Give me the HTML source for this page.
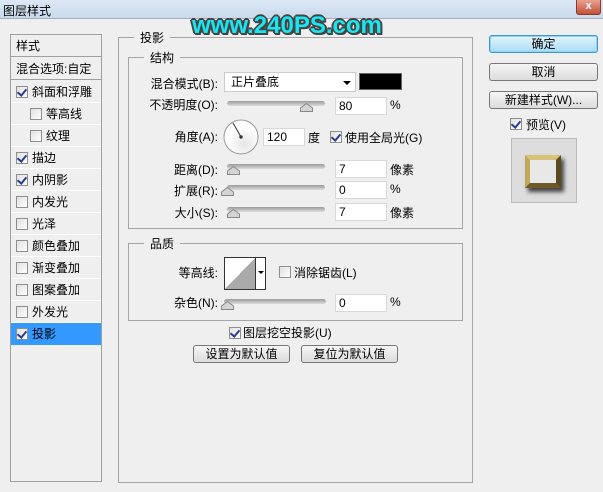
<!DOCTYPE html>
<html><head><meta charset="utf-8"><style>
*{margin:0;padding:0;box-sizing:border-box}
body{width:603px;height:492px;background:#efefef;font-family:"Liberation Sans","Noto Sans CJK SC",sans-serif;font-size:12px;color:#000;position:relative;overflow:hidden}
.a{position:absolute;white-space:nowrap}
.title{left:0;top:0;width:603px;height:19px;background:linear-gradient(#dde8f5,#c9d9ec);border-bottom:1px solid #aab}
.close{left:576px;top:0;width:25px;height:15px;background:linear-gradient(#e8a08e,#c4513a);border:1px solid #8a3a2a;border-top:none;border-radius:0 0 3px 3px;color:#fff;font-weight:bold;text-align:center;font-size:11px;line-height:13px}
.wm{left:192px;top:12px;font-size:24px;font-weight:bold;color:#19e6f0;text-shadow:-2px 0 #444,2px 0 #444,0 -2px #444,0 2px #444,-1px -1px #444,1px 1px #444,-1px 1px #444,1px -1px #444,2px 2px #444}
.panel{left:10px;top:34px;width:92px;height:448px;border:1px solid #a0a0a0;background:#efefef}
.row{position:absolute;left:0;width:90px;height:22px;line-height:22px;border-bottom:1px solid #fff}
.cb{position:absolute;width:12px;height:12px;border:1px solid #8e8f8f;background:linear-gradient(135deg,#e0e0e0,#fff)}
.cb.on::after{content:"";position:absolute;left:2px;top:0px;width:4px;height:7px;border:solid #2a3c8e;border-width:0 2px 2px 0;transform:rotate(40deg)}
.box{position:absolute;border:1px solid #a5a5a5}
.leg{position:absolute;background:#efefef;padding:0 6px}
.lbl{position:absolute;text-align:right;width:100px}
.inp{position:absolute;background:#fff;border:1px solid #d8d8d8;height:18px;line-height:16px;padding-left:3px}
.sl{position:absolute;height:5px;border-radius:3px;background:linear-gradient(#999,#ddd);width:98px}
.th{position:absolute;width:13px;height:9px}
.btn{position:absolute;border:1px solid #777;border-radius:3px;background:linear-gradient(#f6f6f6,#dcdcdc);text-align:center;height:18px;line-height:16px}
</style></head><body>
<div class="a title"></div>
<div class="a" style="left:3px;top:2px">图层样式</div>
<div class="a close">x</div>

<div class="a panel">
 <div class="row" style="top:0;padding-left:5px;border-bottom:1px solid #a0a0a0">样式</div>
 <div class="row" style="top:23px;padding-left:5px;border-bottom:1px solid #a0a0a0">混合选项:自定</div>
 <div class="row" style="top:46px"><span class="cb on" style="left:5px;top:5px"></span><span style="position:absolute;left:21px">斜面和浮雕</span></div>
 <div class="row" style="top:68px"><span class="cb" style="left:19px;top:5px"></span><span style="position:absolute;left:35px">等高线</span></div>
 <div class="row" style="top:90px"><span class="cb" style="left:19px;top:5px"></span><span style="position:absolute;left:35px">纹理</span></div>
 <div class="row" style="top:112px"><span class="cb on" style="left:5px;top:5px"></span><span style="position:absolute;left:21px">描边</span></div>
 <div class="row" style="top:134px"><span class="cb on" style="left:5px;top:5px"></span><span style="position:absolute;left:21px">内阴影</span></div>
 <div class="row" style="top:156px"><span class="cb" style="left:5px;top:5px"></span><span style="position:absolute;left:21px">内发光</span></div>
 <div class="row" style="top:178px"><span class="cb" style="left:5px;top:5px"></span><span style="position:absolute;left:21px">光泽</span></div>
 <div class="row" style="top:200px"><span class="cb" style="left:5px;top:5px"></span><span style="position:absolute;left:21px">颜色叠加</span></div>
 <div class="row" style="top:222px"><span class="cb" style="left:5px;top:5px"></span><span style="position:absolute;left:21px">渐变叠加</span></div>
 <div class="row" style="top:244px"><span class="cb" style="left:5px;top:5px"></span><span style="position:absolute;left:21px">图案叠加</span></div>
 <div class="row" style="top:266px"><span class="cb" style="left:5px;top:5px"></span><span style="position:absolute;left:21px">外发光</span></div>
 <div class="row" style="top:288px;background:#3399ff;border:none"><span class="cb on" style="left:5px;top:5px"></span><span style="position:absolute;left:21px">投影</span></div>
</div>

<div class="box" style="left:118px;top:37px;width:355px;height:446px"></div>
<div class="leg" style="left:134px;top:29px">投影</div>
<div class="box" style="left:128px;top:57px;width:335px;height:172px"></div>
<div class="leg" style="left:144px;top:49px">结构</div>

<div class="lbl" style="left:118px;top:75px">混合模式(B):</div>
<div class="inp" style="left:224px;top:72px;width:132px;height:20px;line-height:18px;padding-left:6px;border-color:#ccc">正片叠底<span style="position:absolute;right:4px;top:8px;border:4px solid transparent;border-top:4px solid #000;border-bottom:none"></span></div>
<div class="a" style="left:359px;top:73px;width:43px;height:17px;background:#000;border:1px solid #666"></div>

<div class="lbl" style="left:118px;top:96px">不透明度(O):</div>
<div class="sl" style="left:227px;top:101px"></div>
<svg class="th" style="left:300px;top:103px" viewBox="0 0 13 9"><path d="M6.5 .5 L12.5 5 V8.5 H.5 V5 Z" fill="#d4d4d4" stroke="#888"/></svg>
<div class="inp" style="left:335px;top:97px;width:52px">80</div><div class="a" style="left:390px;top:98px">%</div>

<div class="lbl" style="left:118px;top:128px">角度(A):</div>
<svg class="a" style="left:223px;top:119px" width="36" height="36" viewBox="0 0 36 36"><defs><radialGradient id="g" cx="60%" cy="70%"><stop offset="0" stop-color="#e6e6e6"/><stop offset="1" stop-color="#fff"/></radialGradient></defs><circle cx="18" cy="18" r="17" fill="url(#g)" stroke="#999"/><line x1="18" y1="18" x2="10" y2="4" stroke="#333"/><circle cx="18" cy="18" r="1.7" fill="#333"/></svg>
<div class="inp" style="left:263px;top:128px;width:42px">120</div><div class="a" style="left:308px;top:129px">度</div>
<span class="cb on" style="left:330px;top:131px"></span><div class="a" style="left:345px;top:129px">使用全局光(G)</div>

<div class="lbl" style="left:118px;top:161px">距离(D):</div>
<div class="sl" style="left:227px;top:164px"></div>
<svg class="th" style="left:227px;top:166px" viewBox="0 0 13 9"><path d="M6.5 .5 L12.5 5 V8.5 H.5 V5 Z" fill="#d4d4d4" stroke="#888"/></svg>
<div class="inp" style="left:335px;top:160px;width:52px">7</div><div class="a" style="left:390px;top:161px">像素</div>
<div class="lbl" style="left:118px;top:182px">扩展(R):</div>
<div class="sl" style="left:227px;top:185px"></div>
<svg class="th" style="left:221px;top:187px" viewBox="0 0 13 9"><path d="M6.5 .5 L12.5 5 V8.5 H.5 V5 Z" fill="#d4d4d4" stroke="#888"/></svg>
<div class="inp" style="left:335px;top:181px;width:52px">0</div><div class="a" style="left:390px;top:182px">%</div>
<div class="lbl" style="left:118px;top:204px">大小(S):</div>
<div class="sl" style="left:227px;top:207px"></div>
<svg class="th" style="left:227px;top:209px" viewBox="0 0 13 9"><path d="M6.5 .5 L12.5 5 V8.5 H.5 V5 Z" fill="#d4d4d4" stroke="#888"/></svg>
<div class="inp" style="left:335px;top:203px;width:52px">7</div><div class="a" style="left:390px;top:204px">像素</div>

<div class="box" style="left:128px;top:243px;width:335px;height:78px"></div>
<div class="leg" style="left:144px;top:235px">品质</div>
<div class="lbl" style="left:118px;top:264px">等高线:</div>
<div class="a" style="left:224px;top:257px;width:42px;height:33px;border:1px solid #333;background:#fff"></div>
<div class="a" style="left:225px;top:258px;width:30px;height:31px;background:linear-gradient(to bottom right,#fff 50%,#aaa 50%)"></div>
<div class="a" style="left:255px;top:257px;width:1px;height:33px;background:#333"></div>
<div class="a" style="left:258px;top:271px;border:3px solid transparent;border-top:3px solid #000;border-bottom:none"></div>
<span class="cb" style="left:279px;top:266px"></span><div class="a" style="left:294px;top:264px">消除锯齿(L)</div>
<div class="lbl" style="left:118px;top:294px">杂色(N):</div>
<div class="sl" style="left:224px;top:299px;width:102px"></div>
<svg class="th" style="left:221px;top:301px" viewBox="0 0 13 9"><path d="M6.5 .5 L12.5 5 V8.5 H.5 V5 Z" fill="#d4d4d4" stroke="#888"/></svg>
<div class="inp" style="left:335px;top:294px;width:52px">0</div><div class="a" style="left:390px;top:295px">%</div>

<span class="cb on" style="left:229px;top:327px"></span><div class="a" style="left:243px;top:324px">图层挖空投影(U)</div>
<div class="btn" style="left:193px;top:345px;width:97px">设置为默认值</div>
<div class="btn" style="left:301px;top:345px;width:97px">复位为默认值</div>

<div class="btn" style="left:489px;top:35px;width:109px;border-color:#3c9ad0;background:linear-gradient(#e4f5fd,#a9dcf5);box-shadow:0 0 0 1px #8fd0f3 inset">确定</div>
<div class="btn" style="left:489px;top:63px;width:109px">取消</div>
<div class="btn" style="left:489px;top:91px;width:109px">新建样式(W)...</div>
<span class="cb on" style="left:510px;top:118px"></span><div class="a" style="left:526px;top:116px">预览(V)</div>
<div class="a" style="left:511px;top:138px;width:66px;height:65px;border:1px solid #bbb;background:#ddd"></div>
<div class="a" style="left:525px;top:155px;width:36px;height:33px;border:5px solid #9a8440;border-top-color:#d8c27a;border-left-color:#c2a85a;border-right-color:#5a4a20;border-bottom-color:#6e5a28;box-shadow:3px 4px 4px #444;background:#e8e8e8"></div>

<div class="a wm">www.240PS.com</div>
</body></html>
